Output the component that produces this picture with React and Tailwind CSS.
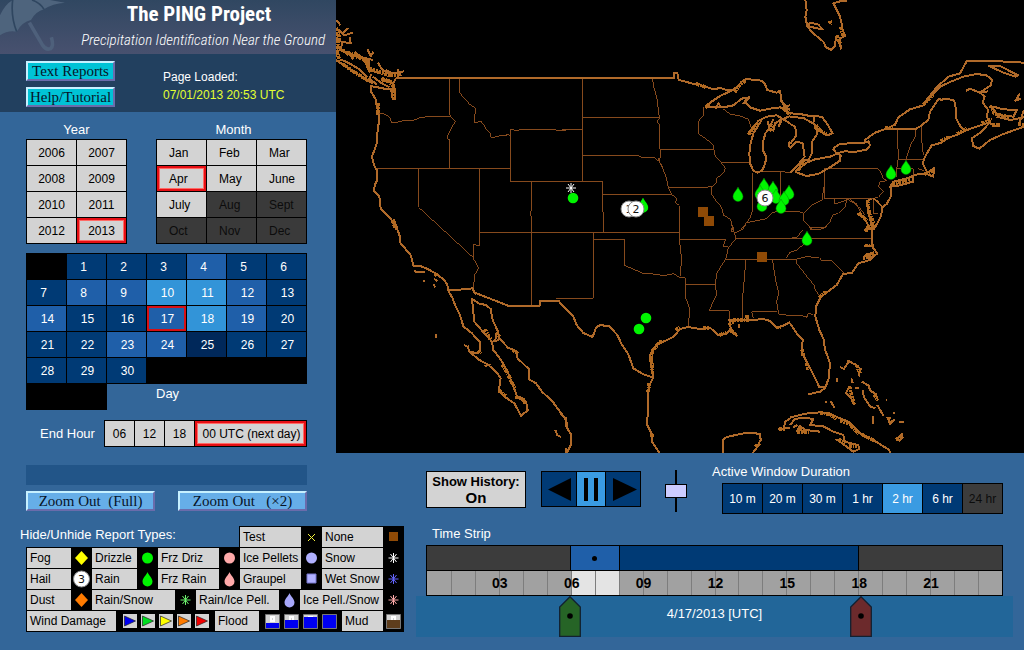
import { useState } from "react";
import clsx from "clsx";

const years = [2006, 2007, 2008, 2009, 2010, 2011, 2012, 2013];
const months = ["Jan", "Feb", "Mar", "Apr", "May", "June", "July", "Aug", "Sept", "Oct", "Nov", "Dec"];
const LAST_MONTH = 6;

// number of reports per day, as a level: 0 few ... 3 many
const dayLevel = { 4: 2, 8: 2, 9: 2, 10: 3, 11: 3, 12: 2, 14: 2, 17: 2, 18: 3, 19: 2, 23: 2, 24: 2, 25: 0 };
const levelColors = ["bg-[#00285a]", "bg-[#003a75]", "bg-[#1f5fa9]", "bg-[#3294d8]"];

const durations = ["10 m", "20 m", "30 m", "1 hr", "2 hr", "6 hr", "24 hr"];

const selectedBox = "border-2 border-[#e60f14] shadow-[inset_0_0_0_1px_#ff6a66]";

// every tile of the map is drawn on a grid of three units to the pixel
const tiles = [
  {
    x: 0, y: 0,
    coast: "M180 234H690M105 256L104 274L112 286L120 300L122 318L128 322L124 340L130 346L128 370L124 400L122 430L116 448L108 470L114 495L122 510L124 540L116 556L114 574L130 588L134 625L148 640L165 658L172 668L182 690M0 180L30 200L60 220L90 238L110 250M14 178L40 190L70 208L94 232M104 258L125 262L145 266L165 268L170 298L178 298L176 270L172 250L180 234M0 60L14 76M18 104L36 84M8 90L24 106L50 98M0 115L20 128L12 150L36 158L52 178M42 110L44 130L20 126M56 156L78 172L110 180M94 148L104 168L112 156M100 180L98 200L108 212L130 220M126 188L136 206L156 220M148 210L170 220L204 214M184 206L194 228M110 230L138 250L160 262M106 222L100 236L124 254M172 656L184 684M166 662L176 676",
    ragged: "M0 84L10 110L4 140L30 158L60 164L90 184L100 206L120 212L160 226L190 226M0 150L12 184M20 192L60 220L98 242M136 236L160 244L174 262L174 296M126 310V348M172 660L178 684M0 100L4 170M30 160L80 176M84 178L104 216M140 240L170 246",
    state: "M130 342L145 342L160 350L166 366L180 368L200 362L225 363L250 354L280 349H342M340 234V340L346 352L358 364L346 385L334 408V416L342 420V506M370 234V276L380 290L390 300L400 312L420 326L416 348V368L435 364L446 378L452 390L462 400L466 414L490 408L510 407L514 402L523 408M523 388V544H690M523 388L540 391L560 389H655L665 391H690M122 506H523M248 506V622L322 690M430 506V690M586 544V630L583 640L586 650V690",
  },
  {
    x: 224, y: 0,
    coast: "M0 234H343V218L352 220L356 240L380 246L400 252L412 250L430 258L460 268L480 264L500 270L520 270M438 322L450 308L480 288L510 274L530 262L545 245L560 236L580 240L605 242L615 252L622 270L650 278L660 272L664 300L672 318L690 330M438 322L470 320L490 322L520 316L545 296L568 292L556 308L570 322L600 332L630 326L660 322L690 340M466 326L476 310L484 324M550 312L558 298M570 404L565 400L580 380L596 362L606 358L590 385L580 400L572 430L568 460L570 490L580 512L592 518L606 512L616 490L618 470L608 450V430L616 400L628 385L640 392L645 370L658 362L690 348M600 360L620 350L650 346L690 370M622 362L628 382L640 358M655 380L664 362M690 424L686 434L690 444M660 300L684 322M668 330L682 318L690 316",
    ragged: "M524 276L536 258L558 240M566 404L580 384L592 370M436 322L448 312M410 252L440 262M668 322L690 346M628 392L642 376",
    state: "M67 234V544M0 391L12 389H67M67 352H298M277 234L282 264L290 290L294 320L297 345L298 356L290 366L300 375V448L302 466L297 484M67 466H235L245 472L270 474H285L297 484L310 510L318 530L325 562L336 584L350 596L347 608L358 617V690M295 474L299 488L308 500M300 448H460M127 583H336M0 544H127V583L131 690M325 562H440L455 558M432 322V345L418 358L414 380L416 402L440 418L460 436L464 465L484 488L496 505L490 520L470 535L468 550L456 562V585L470 605L485 622L490 645L512 658L518 690M484 488H568M488 326L510 342L540 348L566 358L572 380M577 518V632L572 650L560 668L542 690M592 515H661L690 517M661 515V600M560 668L590 662L620 656L635 640L655 632L690 634",
  },
  {
    x: 454, y: 0,
    coast: "M46 0L50 30L46 50L52 80L70 100L100 125L108 142L124 150L134 140L138 115L146 125L154 148M170 2L150 4L130 10L138 25L148 45L155 70L158 90L166 108L150 115L152 140M52 78L62 68L85 74L98 88L76 84L52 78M0 340L30 342L60 348L95 350L112 372L128 400L112 406L100 400L80 385L70 370L72 352M0 350L40 354L76 374L82 402L66 425V460L55 480L36 482L30 500L16 516M16 516L50 528L85 522L120 502L150 482L152 466L144 460L120 470L75 478L50 488L30 504L16 516M128 446L150 432L180 430H215L236 424L240 436L232 448L195 456L165 454L140 460L128 446M0 372L16 380L18 408L0 432M0 445L20 425L38 430L44 470L26 492L0 518M222 422L255 398L290 386L315 374L325 352L360 328L400 316L420 290L450 260L480 246L520 230L560 222L590 226L606 240L602 256L570 278L540 266L528 272M400 312L440 262L475 230L510 220L530 184L570 182L630 184L702 188M290 386H378L392 378L415 360L420 335L446 296L455 300L462 296L490 300L496 310L498 355L512 380L525 392M525 392L500 405L470 415L455 428L425 436L405 470L398 490L412 518L432 505L430 530L410 522L385 522L350 535L310 545L300 560L330 556L370 545V532M304 560L302 590L290 612L278 622L262 605L250 594M278 622L272 650L262 670L250 690M244 596L230 605L236 640L246 680L240 690M200 640L224 655L240 688M525 392L560 380L600 366L590 350L595 330L578 308L584 290L570 278L595 274M600 366L575 395L545 415L550 438L568 446L600 420L640 402L702 380M600 318L625 345L670 350L680 330L640 328L610 320M620 350L660 360L702 352M598 198L630 198L684 226L676 230L640 218ZM690 280L676 302L692 296M688 368L702 330M600 372L628 380",
    ragged: "M140 106L150 130M152 80L160 110M120 62L122 74M286 384H308M400 314L430 284M452 424L480 410M502 402L530 384M575 370L606 358M600 316L612 340L660 352M404 522L432 512M306 552L360 540M232 600L238 640L252 672L242 690M206 640L232 662M74 380L110 404M24 510L44 484M606 376L630 374M684 372L702 374M90 392L78 376",
    state: "M103 506H262L272 515L280 535L292 542L270 545L266 560L280 575L265 592L248 596H103V506M102 560L96 600L75 610L60 620L40 640V660L60 682L70 690M0 634L30 636L40 640M133 596V612L160 604L172 598L165 620L145 640L128 645L118 670L100 684L60 682M172 598L190 608L210 625L225 645M180 598L200 612L214 640M250 600V642H265M322 390L325 475L320 506L318 532M325 478H398M378 390V405L362 435L350 470L348 478M394 380V410L400 465M320 506H370V528M385 506L402 512",
  },
  {
    x: 0, y: 225,
    coast: "M170 0L182 8L192 35V52L225 92L232 122L255 124L275 132L300 146L325 165L334 180L338 200L350 220L355 235L372 270L382 304L408 325L432 352V375L425 385L400 380L395 362M400 380L430 405L455 418L482 442L494 460L488 498L510 518L535 535L555 572L575 556L570 530L545 518L530 480L515 440L495 405L472 375L468 350L450 330L430 308L415 290L408 222L430 236L450 240L464 252L470 285L486 320L490 340L516 368L540 378L545 400L578 432V462L600 475L618 500L650 530L690 585V605M470 350L488 345M334 196L370 194L410 190L414 202L516 242H612V228H668L690 252M234 136L240 142L266 140M260 168H268M294 162L304 168M292 178L298 186M298 326L302 340M384 360L392 364M658 615L664 630L674 636M482 322L478 345M412 196L420 208M548 514L566 524M690 670V684M446 424L464 418",
    ragged: "M446 312L464 344M482 322L490 336M170 4H184M424 378L434 386M498 418L516 446M518 452L536 490M488 496L512 516M530 374L546 386M544 514V524M560 520L566 536M296 146L304 152",
    state: "M306 0L410 96M430 0V62L412 58V100L428 130L416 150L412 190M430 24H690M586 0V242M660 222H690",
  },
  {
    x: 224, y: 225,
    coast: "M0 234L40 275L50 300L70 324L98 336L108 308L120 300L148 304L172 330L185 358L205 388L220 430L250 448L280 458M280 458L274 420L270 390L290 360L310 350L340 336L360 312L385 306L420 312L450 308L475 330L500 326L512 310L508 285L520 284L570 286L610 282L630 288L650 308L670 302L690 292M512 315L530 332L516 322M536 296V308M280 458L268 480L264 510L262 600L276 628V650L298 684M0 565L18 580L22 610L34 630L32 660L20 684M488 684V644L500 636L555 624L600 626L602 645L590 668L578 684M690 580L676 590L672 608M655 612L690 608M0 635H4",
    ragged: "M272 410L276 380L298 352M296 350H312M346 314L360 308M274 400L278 450M268 474L264 504M430 310H450M520 286H570M562 270V286M506 300L522 290M512 316L528 330M478 330L500 322M648 308H662M586 666L600 654M276 626V640M658 612H676",
    state: "M0 24H358M130 0V24M100 24V220H0M100 43H194V122L220 132L245 144L290 148L310 152L340 146L360 158H376V215L390 255L384 306M358 0V43L364 95L362 152M358 43H498L488 64H505M376 178L410 180H466M518 0L522 20L528 42L505 68L498 100L470 145L466 178L470 210L455 240L448 258H508L510 285M466 180L470 212M528 42L560 40H690M498 103H690M558 103L548 215V278M637 103L648 170L656 205L650 230L656 268L690 271M575 260H650M575 260L580 280M518 0L514 20L530 22L548 12L558 0M690 82L678 100",
  },
  {
    x: 454, y: 225,
    coast: "M245 0V45L250 70L262 85L240 105L205 115L185 145L160 146L140 180L92 216L78 245L76 275L88 315L102 345L104 370L120 415L116 460L106 488L90 500L55 508M0 295L20 325L38 345L35 380L52 415L66 440L88 486L106 485M222 15L236 8M222 62L250 64M225 90L250 82L230 100L250 96M222 104L224 90M0 578L45 566L90 562L115 564L150 580L175 590L215 628L255 648L298 675L300 684M0 600L15 582L40 578L70 582L60 600L100 604L130 620L160 630L165 650L205 660L208 672L190 680L150 650L136 642M20 620L30 602L45 615L90 620M150 426L162 432L176 410L196 418L212 432L206 454M170 406L184 412M142 460V470M184 460L188 474M178 484L168 504L184 520L192 540M196 490H206M216 470L236 482L240 496L258 508L264 526M218 496L222 516L240 544L256 550M262 540L280 572M288 526H292M308 564H314M292 576L300 596L314 584M328 592H342M318 644L336 626L338 638L326 648M122 528L134 550M104 530H110M248 572L250 598M8 608L22 600",
    ragged: "M200 420L210 446M178 484L192 538M232 2L250 10M228 20L234 0M224 62H250M226 94L256 84M90 564L120 568L140 582M150 586L180 598L206 626M214 628L254 648M28 608L42 624M146 642L166 654M176 664L202 664M296 576L304 592M36 374L40 392M50 414L54 434M318 644L334 636M22 620L56 622M88 218L108 200M252 508L264 526",
    state: "M0 103H18L50 95L88 98L96 108H125L162 144M18 103L20 115L55 160L72 180L76 195L88 212M0 270L50 274V280L54 266L70 268M0 40H245M0 82L20 76L50 50M0 40L20 36L40 15M55 0L62 14H90L110 5",
  },
];

const mapDrops = [
  [307, 205], [402, 194], [555, 172], [570, 167], [471, 238], [428, 185], [424, 192], [437, 188],
  [426, 204], [440, 196], [453, 192], [448, 198], [445, 206],
];

function Drop({ x, y, fill = "#00f500" }) {
  return <path transform={`translate(${x} ${y})`} d="M0 -7C1 -4 5 -1 5 2.500A5 5 0 0 1 -5 2.500C-5 -1 -1 -4 0 -7Z" fill={fill} />;
}

function Flake({ x, y, color }) {
  return <path transform={`translate(${x} ${y})`} d="M0 -5V5M-5 0H5M-3 -4L3 4M3 -4L-3 4" stroke={color} fill="none" />;
}

function Hail({ x, y, n }) {
  return (
    <g>
      <circle cx={x} cy={y} r="8" fill="#fff" stroke="#888" />
      <text x={x} y={y + 4} textAnchor="middle" fontSize="11" fontFamily="DejaVu Sans, sans-serif" fill="#111">{n}</text>
    </g>
  );
}

function ReportMap() {
  return (
    <svg viewBox="0 0 688 453" className="block h-auto w-full bg-black" role="img" aria-label="Report map">
      {tiles.map((t) => (
        <g key={`${t.x}-${t.y}`} transform={`translate(${t.x} ${t.y}) scale(.33333)`} fill="none" shapeRendering="crispEdges">
          <path d={t.state} stroke="#864a1d" strokeWidth="3" />
          <path d={t.coast} stroke="#b06a2a" strokeWidth="6" strokeLinejoin="round" />
          <path d={t.ragged} stroke="#b36a20" strokeWidth="11" strokeDasharray="9 3 5 2" />
        </g>
      ))}
      <g fill="#8f4a06">
        <rect x="362" y="207" width="10" height="10" />
        <rect x="368" y="216" width="10" height="10" />
        <rect x="421" y="252" width="10" height="10" />
      </g>
      {mapDrops.map(([x, y]) => (
        <g key={`${x}-${y}`} stroke="#008a00" strokeWidth=".5"><Drop x={x} y={y} /></g>
      ))}
      <g fill="#00f500">
        <circle cx="237" cy="198" r="5.300" />
        <circle cx="310" cy="318" r="5.300" />
        <circle cx="303" cy="329" r="5.300" />
      </g>
      <Drop x={307} y={205} />
      <Flake x={235} y={188} color="#fff" />
      <Hail x={293} y={209} n="1" />
      <Hail x={300} y={209} n="2" />
      <Hail x={429} y={198} n="6" />
    </svg>
  );
}

function Cell({ children, off, on, className }) {
  return (
    <button
      disabled={off}
      className={clsx("h-[25px] text-xs", off ? "bg-[#3a3a3a] text-[#0c0c0c]" : "bg-[#d3d3d3] text-black", on && selectedBox, className)}
    >
      {children}
    </button>
  );
}

function BevelButton({ children, className }) {
  return (
    <button className={clsx("h-5 border-2 border-t-[#c6f0ff] border-l-[#c6f0ff] border-r-[#6a6cab] border-b-[#6a6cab] font-['Liberation_Serif',serif] text-[15px] leading-4 whitespace-pre text-[#061428]", className)}>
      {children}
    </button>
  );
}

/* ---------- report type legend ---------- */

function Type({ w, children }) {
  return <button className={clsx("h-5 shrink-0 overflow-hidden bg-[#d3d3d3] pl-[3px] text-left text-xs whitespace-nowrap text-black", w)}>{children}</button>;
}

function Icon({ children }) {
  return <svg viewBox="0 0 21 20" className="h-5 w-[21px] shrink-0 overflow-visible" aria-hidden="true">{children}</svg>;
}

const Diamond = ({ fill }) => <path d="M10.500 3L17 10L10.500 17L4 10Z" fill={fill} />;
const Dot = ({ fill }) => <circle cx="10.500" cy="10" r="5.500" fill={fill} />;

function WindIcon({ fill }) {
  return (
    <svg viewBox="0 0 14 14" className="size-[14px]" aria-hidden="true">
      <path d="M0 0H14V14H0Z" fill="#d3d3d3" />
      <path d="M1.500 2L12.500 7L1.500 12Z" fill={fill} stroke="#222" strokeWidth=".7" />
    </svg>
  );
}

function FloodIcon({ level, fill = "#0000f0" }) {
  return (
    <svg viewBox="0 0 15 15" className="size-[15px]" aria-hidden="true">
      <path d="M.5 .5H14.500V14.500H.5Z" fill="#d3d3d3" stroke="#777" />
      <path d="M6 3H9V7H6Z" stroke="#fff" strokeWidth="2" fill="#d3d3d3" />
      <rect x="1" y={level} width="13" height={14 - level} fill={fill} />
    </svg>
  );
}

const legendRow = "flex border-t border-l border-black bg-black";

function Legend() {
  return (
    <div className="w-[384px] text-xs">
      <div className="flex items-start justify-between">
        <h2 className="text-[13px] leading-[18px]">Hide/Unhide Report Types:</h2>
        <div className={legendRow}>
          <Type w="w-[61px]">Test</Type>
          <Icon><path d="M7 7L14 14M14 7L7 14" stroke="#f4f23c" /></Icon>
          <Type w="w-[61px]">None</Type>
          <Icon><path d="M6 5H15V14H6Z" fill="#8f4a06" /></Icon>
        </div>
      </div>
      <div className="ml-[6px] border-b border-black">
        <div className={legendRow}>
          <Type w="w-11">Fog</Type>
          <Icon><Diamond fill="#ffff00" /></Icon>
          <Type w="w-[45px]">Drizzle</Type>
          <Icon><Dot fill="#00f500" /></Icon>
          <Type w="w-[61px]">Frz Driz</Type>
          <Icon><Dot fill="#ffaaaa" /></Icon>
          <Type w="w-[61px]">Ice Pellets</Type>
          <Icon><Dot fill="#b0b0ff" /></Icon>
          <Type w="w-[61px]">Snow</Type>
          <Icon><Flake x={10.5} y={10} color="#fff" /></Icon>
        </div>
        <div className={legendRow}>
          <Type w="w-11">Hail</Type>
          <Icon><Hail x={10.5} y={10} n="3" /></Icon>
          <Type w="w-[45px]">Rain</Type>
          <Icon><Drop x={10.5} y={10} /></Icon>
          <Type w="w-[61px]">Frz Rain</Type>
          <Icon><Drop x={10.5} y={10} fill="#ffaaaa" /></Icon>
          <Type w="w-[61px]">Graupel</Type>
          <Icon><path d="M6 5H15V14H6Z" fill="#b0b0ff" stroke="#7777cc" /></Icon>
          <Type w="w-[61px]">Wet Snow</Type>
          <Icon><Flake x={10.5} y={10} color="#6464ff" /></Icon>
        </div>
        <div className={legendRow}>
          <Type w="w-11">Dust</Type>
          <Icon><Diamond fill="#ff7b00" /></Icon>
          <Type w="w-[83px]">Rain/Snow</Type>
          <Icon><Flake x={10.5} y={10} color="#6cf06c" /></Icon>
          <Type w="w-[83px]">Rain/Ice Pell.</Type>
          <Icon><Drop x={10.5} y={10} fill="#a8a8fa" /></Icon>
          <Type w="w-[83px]">Ice Pell./Snow</Type>
          <Icon><Flake x={10.5} y={10} color="#ffaaaa" /></Icon>
        </div>
        <div className={legendRow}>
          <Type w="w-[89px]">Wind Damage</Type>
          <div className="flex w-[99px] items-center justify-center gap-1">
            <WindIcon fill="#0000f0" />
            <WindIcon fill="#00dd20" />
            <WindIcon fill="#ffff00" />
            <WindIcon fill="#ff7b00" />
            <WindIcon fill="#f00000" />
          </div>
          <Type w="w-11">Flood</Type>
          <div className="flex w-[83px] items-center justify-center gap-1">
            <FloodIcon level={9} />
            <FloodIcon level={6} />
            <FloodIcon level={3} />
            <FloodIcon level={1} />
          </div>
          <Type w="w-[41px]">Mud</Type>
          <div className="flex w-[21px] items-center justify-center">
            <FloodIcon level={6} fill="#5e3d1c" />
          </div>
        </div>
      </div>
    </div>
  );
}

/* ---------- time strip ---------- */

function Handle({ at, fill }) {
  return (
    <svg
      viewBox="0 0 22 41"
      className="absolute top-0 h-[41px] w-[22px] -translate-x-1/2"
      style={{ left: `${at}%` }}
      aria-hidden="true"
    >
      <path d="M11 .7L21.300 11V40.300H.7V11Z" fill={fill} stroke="#122030" strokeWidth="1.300" />
      <circle cx="11" cy="20" r="2.800" fill="#000" />
    </svg>
  );
}

function TimeStrip() {
  const hours = Array.from({ length: 24 }, (_, h) => h);
  return (
    <section>
      <h2 className="pl-4 text-[13px] leading-[18px]">Time Strip</h2>
      <div className="mt-[2px] mr-[21px] ml-[10px] border border-black bg-black">
        <div className="flex h-6 gap-px">
          <div className="grow-6 basis-0 bg-[#3c3c3c]" />
          <div className="flex grow-2 basis-0 items-center justify-center bg-[#1f5fa9]">
            <span className="size-[5px] rounded-full bg-black" />
          </div>
          <div className="grow-10 basis-0 bg-[#003a75]" />
          <div className="grow-6 basis-0 bg-[#3c3c3c]" />
        </div>
        <div className="grid h-[25px] grid-cols-24 border-t border-black">
          {hours.map((h) => (
            <div
              key={h}
              className={clsx("relative flex items-center", h > 0 && "border-l border-[#7d7d7d]", h === 6 || h === 7 ? "bg-[#e4e4e4]" : "bg-[#a1a1a1]")}
            >
              {h > 0 && h % 3 === 0 && (
                <span className="absolute left-0 z-10 -translate-x-1/2 text-sm font-bold text-black">{String(h).padStart(2, "0")}</span>
              )}
            </div>
          ))}
        </div>
      </div>
      <div className="mr-[11px] h-[41px] bg-[#226699] pr-[10px] pl-[10px]">
        <div className="relative flex h-full justify-center pt-[9px] text-[13px] leading-[18px]">
          4/17/2013 [UTC]
          <Handle at={25} fill="#266426" />
          <Handle at={75.4} fill="#6c2a2c" />
        </div>
      </div>
    </section>
  );
}

export default function App() {
  const [speed, setSpeed] = useState(50);

  return (
    <div className="min-h-screen bg-[#336699] font-['Liberation_Sans',Arial,sans-serif] text-white">
      <div className="flex">
        <aside className="w-[336px] shrink-0">
          <header className="relative h-[54px] bg-linear-to-b from-[#304761] to-[#48516f] font-['Roboto_Condensed','Open_Sans_Condensed',sans-serif]">
            <svg viewBox="0 0 198 162" className="absolute top-0 left-0 h-[54px] w-[66px]" aria-hidden="true">
              <path d="M38 0H150L195 8Q158 10 132 28Q108 34 93 60Q66 66 50 95Q24 90 0 106V46Q14 14 38 0Z" fill="#4e647d" />
              <path d="M38 0Q32 50 50 95M96 0Q120 8 132 28" stroke="#2f4660" strokeWidth="5" fill="none" />
              <path d="M88 68L128 136Q138 152 152 146Q162 138 154 112" stroke="#4e607b" strokeWidth="11" fill="none" />
            </svg>
            <h1 className="pt-[2px] pl-[62px] text-center text-[21px] leading-6 font-bold">The PING Project</h1>
            <p className="relative pt-1 pr-[11px] text-right text-[15px] leading-5 font-light whitespace-nowrap italic">
              Precipitation Identification Near the Ground
            </p>
          </header>

          <div className="flex h-[58px] gap-12 bg-[#22405f] pt-[7px] pl-[26px]">
            <div className="flex w-[89px] flex-col gap-[6px]">
              <BevelButton className="bg-[#00c3d6]">Text Reports</BevelButton>
              <BevelButton className="bg-[#00c3d6]">Help/Tutorial</BevelButton>
            </div>
            <p className="pt-[7px] text-xs leading-[18px]">
              Page Loaded:<br />
              <span className="text-[#e2ff30]">07/01/2013 20:53 UTC</span>
            </p>
          </div>

          <div className="px-[26px] pt-[9px] pb-[6px]">
            <div className="flex gap-[29px]">
              <section>
                <h2 className="text-center text-[13px] leading-[18px]">Year</h2>
                <div className="grid grid-cols-[49px_49px] gap-px bg-black p-px">
                  {years.map((y) => <Cell key={y} on={y === 2013}>{y}</Cell>)}
                </div>
              </section>
              <section>
                <h2 className="pl-1 text-center text-[13px] leading-[18px]">Month</h2>
                <div className="grid grid-cols-[49px_49px_49px] gap-px bg-black p-px">
                  {months.map((m, i) => (
                    <Cell key={m} off={i > LAST_MONTH} on={m === "Apr"} className={clsx("text-left", m === "Apr" ? "pl-[10px]" : "pl-3")}>{m}</Cell>
                  ))}
                </div>
              </section>
            </div>

            <section className="mt-[9px] w-[281px]">
              <div className="grid grid-cols-7 gap-px bg-black p-px">
                <span />
                {Array.from({ length: 30 }, (_, i) => i + 1).map((d) => (
                  <button
                    key={d}
                    className={clsx("h-[25px] text-xs", levelColors[dayLevel[d] ?? 1], d < 10 ? "pr-[6px]" : "pl-[2px]", d === 17 && "border-2 border-[#d90f14]")}
                  >
                    {d}
                  </button>
                ))}
              </div>
              <div className="flex">
                <div className="h-[26px] w-[81px] bg-black" />
                <h2 className="pl-[49px] text-[13px] leading-5">Day</h2>
              </div>
            </section>

            <div className="mt-[10px] flex w-[281px] items-center">
              <span className="flex-1 pl-[14px] text-[13px]">End Hour</span>
              <div className="grid w-[203px] grid-cols-[29px_29px_29px_1fr] gap-px bg-black p-px">
                <Cell>06</Cell>
                <Cell>12</Cell>
                <Cell>18</Cell>
                <Cell on className="pl-[2px] whitespace-nowrap">00 UTC (next day)</Cell>
              </div>
            </div>
          </div>
        </aside>

        <main className="min-w-0 flex-1">
          <ReportMap />
        </main>
      </div>

      <div className="flex">
        <div className="w-[416px] shrink-0 pt-3 pl-5">
          <div className="ml-[6px] w-[281px]">
            <div className="h-5 bg-[#225588]" />
            <div className="mt-[6px] flex justify-between">
              <BevelButton className="w-[129px] bg-[#66aee8]">{"Zoom Out  (Full)"}</BevelButton>
              <BevelButton className="w-[129px] bg-[#66aee8]">{"Zoom Out   (×2)"}</BevelButton>
            </div>
          </div>
          <div className="mt-[15px]">
            <Legend />
          </div>
        </div>

        <div className="min-w-0 flex-1 pt-[10px]">
          <div className="flex items-start pr-[21px] pl-[10px]">
            <button className="mt-2 h-[37px] w-[100px] border border-black bg-[#d3d3d3] text-[13px] leading-4 font-bold text-black">
              Show History:
              <span className="block text-[15px] leading-4">On</span>
            </button>
            <div className="mt-2 ml-[15px] grid h-[36px] w-[100px] grid-cols-[34px_28px_1fr] gap-px border border-black bg-black">
              <button aria-label="Back" className="bg-[#003a75]">
                <svg viewBox="0 0 34 34" className="size-full"><path d="M29 6V29L6 17.500Z" /></svg>
              </button>
              <button aria-label="Pause" className="bg-[#3a9be2]">
                <svg viewBox="0 0 28 34" className="size-full"><path d="M7 6H11V29H7ZM17 6H21V29H17Z" /></svg>
              </button>
              <button aria-label="Forward" className="bg-[#003a75]">
                <svg viewBox="0 0 34 34" className="size-full"><path d="M7 6V29L31 17.500Z" /></svg>
              </button>
            </div>
            <input
              type="range"
              aria-label="Animation speed"
              value={speed}
              onChange={(e) => setSpeed(Number(e.target.value))}
              className="mt-[7px] ml-6 h-[42px] w-[22px] appearance-none bg-[linear-gradient(black,black)] bg-[length:2px_100%] bg-center bg-no-repeat [writing-mode:vertical-lr] [&::-webkit-slider-thumb]:h-[14px] [&::-webkit-slider-thumb]:w-[22px] [&::-webkit-slider-thumb]:appearance-none [&::-webkit-slider-thumb]:border [&::-webkit-slider-thumb]:border-black [&::-webkit-slider-thumb]:bg-[#ccccff]"
            />
            <section className="ml-auto w-[291px]">
              <h2 className="text-[13px] leading-[18px]">Active Window Duration</h2>
              <div className="mt-[2px] ml-[10px] grid grid-cols-7 gap-px bg-black p-px">
                {durations.map((d) => (
                  <button
                    key={d}
                    disabled={d === "24 hr"}
                    className={clsx("h-[29px] text-xs", d === "24 hr" ? "bg-[#3c3c3c] text-[#0c0c0c]" : d === "2 hr" ? "bg-[#3a9be2]" : "bg-[#003a75]")}
                  >
                    {d}
                  </button>
                ))}
              </div>
            </section>
          </div>
          <div className="mt-[11px]">
            <TimeStrip />
          </div>
        </div>
      </div>
    </div>
  );
}
